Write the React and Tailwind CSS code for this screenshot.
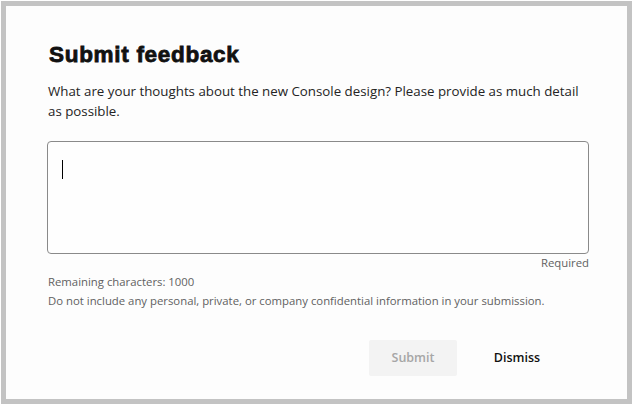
import React from "react";

const bodyFont = { fontFamily: '"Open Sans", "Noto Sans", sans-serif' };

export default function App() {
  return (
    <div className="w-[633px] h-[413px] bg-white p-px">
      <div
        className="w-[631px] h-[403px] border-[5px] border-[#c3c3c3] bg-[#fdfdfd] pl-[41px] pr-[38px] pt-[34px] flex flex-col"
        style={bodyFont}
      >
        <h1 className="pl-[2px] text-[22.5px] leading-[30px] font-bold tracking-[0.7px] text-[#111111] [-webkit-text-stroke:0.8px_#111111] [font-family:'Liberation_Sans',Arial,sans-serif]">
          Submit feedback
        </h1>
        <p className="pl-px mt-[11px] text-[13.3px] leading-[20px] text-[#242424]">
          What are your thoughts about the new Console design? Please provide as much detail as possible.
        </p>
        <div className="mt-[20px] h-[113px] rounded-[4px] border border-[#8a8a8a] bg-[#fefefe] pl-[14px] pt-[18px]">
          <div className="w-px h-[19px] bg-black" />
        </div>
        <div className="text-right text-[11.35px] leading-[18px] text-[#616161]">Required</div>
        <div className="pl-px text-[11.35px] leading-[19px] text-[#616161]">Remaining characters: 1000</div>
        <div className="pl-px text-[11.35px] leading-[19px] text-[#616161]">
          Do not include any personal, private, or company confidential information in your submission.
        </div>
        <div className="mt-[30px] flex justify-end gap-[8px] pr-[20px]">
          <button className="w-[88px] h-[36px] rounded-[2px] bg-[#f3f3f3] text-[12.5px] font-semibold text-[#a6a6a6]">
            Submit
          </button>
          <button className="w-[104px] h-[36px] text-[12.5px] font-semibold text-[#111111]">Dismiss</button>
        </div>
      </div>
    </div>
  );
}
